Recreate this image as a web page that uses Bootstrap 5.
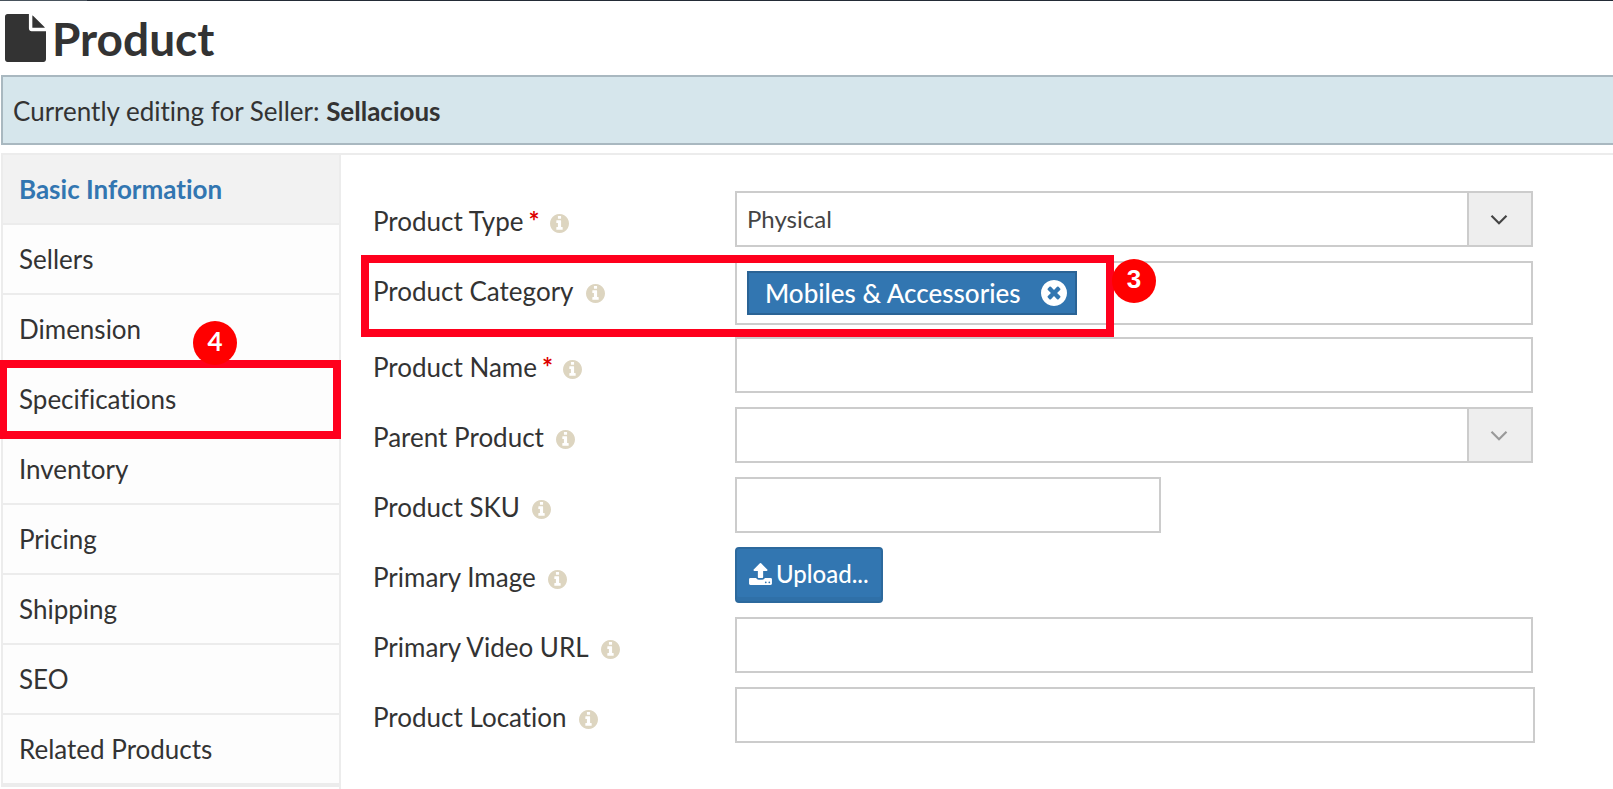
<!DOCTYPE html>
<html lang="en">
<head>
<meta charset="utf-8">
<meta name="viewport" content="width=device-width, initial-scale=1">
<title>Product</title>
<link href="https://cdn.jsdelivr.net/npm/bootstrap@5.3.0/dist/css/bootstrap.min.css" rel="stylesheet">
<style>
  body { font-family: Lato, "Liberation Sans", sans-serif; font-size: 26px; line-height: 36px; color: #333; font-variant-ligatures: none; }
  .top-edge { height: 1px; background: linear-gradient(to right, #48525c 87px, #232b36 87px); }
  .page-title { font-size: 46px; line-height: 58px; height: 74px; padding: 9px 5px 0; gap: 6px; }
  .seller-note { margin-left: 1px; padding: 16px 10px 14px; background: #d6e6ec; border: 2px solid #a9b8c0; border-right: 0; }
  .workspace { margin: 8px 0 0 1px; border-top: 2px solid #ececec; }
  .side-col { width: 340px; border-right: 2px solid #ececec; }
  .side-list { border-left: 2px solid #ececec; border-bottom: 2px solid #ececec; }
  .side-link { display: block; padding: 16px; color: #333; text-decoration: none; background: #fdfdfd; border-bottom: 2px solid #ececec; }
  .side-link.active { color: #3276b1; font-weight: 700; background: #f2f2f2; }
  .product-form { padding: 36px 80px 24px 32px; min-width: 0; }
  .form-line { display: grid; grid-template-columns: 362px minmax(0, 1fr); margin-bottom: 14px; }
  .form-line.category-line { margin-bottom: 12px; }
  .field-label { padding-top: 12px; }
  .required-star { color: #d00; font-weight: 700; margin-left: 5px; }
  .info-icon { width: 19px; height: 19px; fill: #ddd5c0; margin-left: 12px; vertical-align: -2px; }
  .required-star + .info-icon { margin-left: 10px; }
  .field, .field:disabled { height: 56px; border: 2px solid #ccc; border-radius: 0; font-size: 24px; line-height: 36px; padding: 0 66px 0 10px; color: #444; background: #fff; }
  .field-sku { width: 426px; }
  .field-wide { width: calc(100% + 2px); }
  .field-arrow { width: 66px; border: 2px solid #ccc; background: #eee; color: #444; padding: 2px 2px 0 0; pointer-events: none; }
  .field-arrow svg { width: 18px; height: 12px; }
  .field-arrow.muted { color: #999; }
  .tag-box { height: 64px; border: 2px solid #ccc; padding: 8px 10px; }
  .tag-item { height: 44px; background: #3276b1; border: 2px solid #2a6395; color: #fff; font-weight: 500; padding: 0 8px 0 16px; gap: 20px; }
  .tag-item button { width: 26px; height: 26px; color: #fff; }
  .upload-btn { height: 56px; font-size: 24px; font-weight: 500; line-height: 36px; border: 2px solid #2c699d; border-radius: 4px; background: #3276b1; color: #fff; padding: 0 12px 2px; gap: 4px; box-shadow: inset 0 -4px 0 rgba(0,0,0,.05); }
  .upload-btn svg { width: 23px; height: 22px; }
  .outline-mark { border: 8px solid #ff001d; pointer-events: none; z-index: 2; }
  .outline-side { top: -5px; left: -4px; right: -2px; height: 79px; }
  .outline-category { top: -6px; left: -12px; width: 753px; height: 82px; }
  .step-dot { width: 44px; height: 44px; background: #f00; color: #fff; font-weight: 700; line-height: 40px; text-align: center; z-index: 3; }
  .dot-side { left: 190px; top: -44px; }
  .dot-category { left: 739px; top: -2px; font-family: "Liberation Sans", sans-serif; }
</style>
</head>
<body class="bg-white overflow-x-hidden">
<svg class="d-none" aria-hidden="true">
  <symbol id="i-info" viewBox="128 128 1536 1536"><path d="M1152 1376v-160q0-14-9-23t-23-9h-96v-512q0-14-9-23t-23-9h-320q-14 0-23 9t-9 23v160q0 14 9 23t23 9h96v320h-96q-14 0-23 9t-9 23v160q0 14 9 23t23 9h448q14 0 23-9t9-23zm-128-896v-160q0-14-9-23t-23-9h-192q-14 0-23 9t-9 23v160q0 14 9 23t23 9h192q14 0 23-9t9-23zm640 416q0 209-103 385.5t-279.5 279.5-385.5 103-385.5-103-279.5-279.5-103-385.5 103-385.5 279.5-279.5 385.5-103 385.5 103 279.5 279.5 103 385.5z"/></symbol>
  <symbol id="i-chevron" viewBox="0 0 18 12"><path d="M1.500 1.800 9 9.300l7.500-7.500" fill="none" stroke="currentColor" stroke-width="2.200"/></symbol>
</svg>
<div class="min-vh-100 d-flex flex-column">
  <div class="top-edge"></div>
  <h1 class="page-title d-flex fw-bold m-0">
    <svg class="mt-1" width="41" height="48" viewBox="128 0 1536 1792" fill="currentColor" aria-hidden="true"><path d="M1152 512v-472q22 14 36 28l408 408q14 14 28 36h-472zm-128 32q0 40 28 68t68 28h544v1056q0 40-28 68t-68 28h-1344q-40 0-68-28t-28-68v-1600q0-40 28-68t68-28h800v544z"/></svg>
    Product
  </h1>
  <div class="seller-note">Currently editing for Seller: <strong>Sellacious</strong></div>
  <main class="workspace d-flex flex-grow-1">
    <div class="side-col flex-shrink-0">
      <nav class="side-list" aria-label="Product sections">
        <a class="side-link active" href="#basic">Basic Information</a>
        <a class="side-link" href="#sellers">Sellers</a>
        <a class="side-link" href="#dimension">Dimension</a>
        <div class="position-relative">
          <a class="side-link" href="#specifications">Specifications</a>
          <span class="outline-mark outline-side position-absolute"></span>
          <span class="step-dot dot-side position-absolute rounded-circle">4</span>
        </div>
        <a class="side-link" href="#inventory">Inventory</a>
        <a class="side-link" href="#pricing">Pricing</a>
        <a class="side-link" href="#shipping">Shipping</a>
        <a class="side-link" href="#seo">SEO</a>
        <a class="side-link" href="#related">Related Products</a>
      </nav>
    </div>
    <form class="product-form flex-grow-1">
      <div class="form-line">
        <label class="field-label" for="type">Product Type<span class="required-star">*</span><svg class="info-icon"><use href="#i-info"/></svg></label>
        <div class="position-relative">
          <select class="field form-select w-100" id="type"><option>Physical</option></select>
          <span class="field-arrow position-absolute top-0 end-0 bottom-0 d-flex align-items-center justify-content-center"><svg><use href="#i-chevron"/></svg></span>
        </div>
      </div>
      <div class="form-line category-line position-relative">
        <div class="field-label" id="category">Product Category<svg class="info-icon"><use href="#i-info"/></svg></div>
        <div class="tag-box d-flex" role="group" aria-labelledby="category">
          <span class="tag-item d-flex align-items-center">Mobiles &amp; Accessories
            <button type="button" class="border-0 bg-transparent p-0 d-flex" aria-label="Remove"><svg width="26" height="26" viewBox="128 128 1536 1536" fill="currentColor"><path d="M1277 1122q0-26-19-45l-181-181 181-181q19-19 19-45 0-27-19-46l-90-90q-19-19-46-19-26 0-45 19l-181 181-181-181q-19-19-45-19-27 0-46 19l-90 90q-19 19-19 46 0 26 19 45l181 181-181 181q-19 19-19 45 0 27 19 46l90 90q19 19 46 19 26 0 45-19l181-181 181 181q19 19 45 19 27 0 46-19l90-90q19-19 19-46zm387-226q0 209-103 385.5t-279.5 279.5-385.5 103-385.5-103-279.5-279.5-103-385.5 103-385.5 279.5-279.5 385.5-103 385.5 103 279.5 279.5 103 385.500z"/></svg></button>
          </span>
        </div>
        <span class="outline-mark outline-category position-absolute"></span>
        <span class="step-dot dot-category position-absolute rounded-circle">3</span>
      </div>
      <div class="form-line">
        <label class="field-label" for="name">Product Name<span class="required-star">*</span><svg class="info-icon"><use href="#i-info"/></svg></label>
        <input class="field form-control" id="name" type="text">
      </div>
      <div class="form-line">
        <label class="field-label" for="parent">Parent Product<svg class="info-icon"><use href="#i-info"/></svg></label>
        <div class="position-relative">
          <select class="field form-select w-100" id="parent"><option></option></select>
          <span class="field-arrow muted position-absolute top-0 end-0 bottom-0 d-flex align-items-center justify-content-center"><svg><use href="#i-chevron"/></svg></span>
        </div>
      </div>
      <div class="form-line">
        <label class="field-label" for="sku">Product SKU<svg class="info-icon"><use href="#i-info"/></svg></label>
        <input class="field field-sku form-control" id="sku" type="text">
      </div>
      <div class="form-line">
        <label class="field-label" for="image">Primary Image<svg class="info-icon"><use href="#i-info"/></svg></label>
        <div class="d-flex">
          <button class="upload-btn d-flex align-items-center" id="image" type="button"><svg viewBox="64 64 1664 1600" fill="currentColor" aria-hidden="true"><path d="M1344 1472q0-26-19-45t-45-19-45 19-19 45 19 45 45 19 45-19 19-45zm256 0q0-26-19-45t-45-19-45 19-19 45 19 45 45 19 45-19 19-45zm128-224v320q0 40-28 68t-68 28h-1472q-40 0-68-28t-28-68v-320q0-40 28-68t68-28h427q21 56 70.500 92t110.500 36h256q61 0 110.500-36t70.500-92h427q40 0 68 28t28 68zm-325-648q-17 40-59 40h-256v448q0 26-19 45t-45 19h-256q-26 0-45-19t-19-45v-448h-256q-42 0-59-40-17-39 14-69l448-448q18-19 45-19t45 19l448 448q31 30 14 69z"/></svg>Upload...</button>
        </div>
      </div>
      <div class="form-line">
        <label class="field-label" for="video">Primary Video URL<svg class="info-icon"><use href="#i-info"/></svg></label>
        <input class="field form-control" id="video" type="url">
      </div>
      <div class="form-line">
        <label class="field-label" for="location">Product Location<svg class="info-icon"><use href="#i-info"/></svg></label>
        <input class="field field-wide form-control" id="location" type="text">
      </div>
    </form>
  </main>
</div>
<script src="https://cdn.jsdelivr.net/npm/bootstrap@5.3.0/dist/js/bootstrap.bundle.min.js"></script>
</body>
</html>
